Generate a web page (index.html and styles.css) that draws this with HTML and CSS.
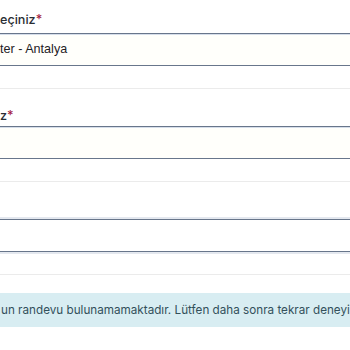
FILE: index.html
```html
<!DOCTYPE html>
<html lang="tr">
<head>
<meta charset="utf-8">
<link rel="stylesheet" href="styles.css">
</head>
<body>
<div class="form">
  <div class="group">
    <div class="label label-first">eçiniz<span class="req">*</span></div>
    <div class="field">ter - Antalya</div>
    <div class="sep"></div>
  </div>
  <div class="group">
    <div class="label label-second">z<span class="req">*</span></div>
    <div class="field"></div>
    <div class="sep"></div>
  </div>
  <div class="group group-third">
    <div class="field field-focus"></div>
    <div class="sep"></div>
  </div>
  <div class="alert">un randevu bulunamamaktadır. Lütfen daha sonra tekrar deneyiniz.</div>
</div>
</body>
</html>
```
FILE: styles.css
```css
html, body {
  margin: 0;
  padding: 0;
  background: #ffffff;
  overflow: hidden;
}
body {
  width: 350px;
  height: 350px;
}
.form {
  margin-left: -10px;
  width: 400px;
  font-family: Inter, "Liberation Sans", sans-serif;
  color: #2b2f33;
}
.label {
  font-family: Inter, sans-serif;
  font-weight: 500;
  font-size: 12.6px;
  line-height: 20px;
  height: 20px;
  padding-left: 10px;
  color: #2a2e33;
  white-space: nowrap;
}
.label-first {
  padding-top: 10px;
  margin-bottom: 3px;
}
.label-second {
  margin-top: 17px;
  margin-bottom: 0;
}
.req {
  color: #a3213f;
}
.field {
  height: 31px;
  border-top: 1px solid #68768b;
  border-bottom: 1px solid #68768b;
  background: #fffffb;
  box-shadow: inset 0 1px 0 #d6deea;
  padding-left: 10px;
  font-family: "Liberation Sans", Arial, sans-serif;
  font-size: 12.6px;
  line-height: 31px;
  color: #1f2226;
  white-space: nowrap;
}
.field-focus {
  background: #ffffff;
  box-shadow: 0 0 0 2px #e4e8ef;
}
.sep {
  margin-top: 22px;
  height: 1px;
  background: #ebebeb;
}
.group-third {
  margin-top: 37px;
}
.alert {
  margin-top: 18px;
  height: 34px;
  background: #d8edf2;
  color: #33505b;
  padding-left: 11px;
  font-family: Inter, sans-serif;
  font-size: 11.7px;
  line-height: 34px;
  white-space: nowrap;
  overflow: hidden;
}
```
